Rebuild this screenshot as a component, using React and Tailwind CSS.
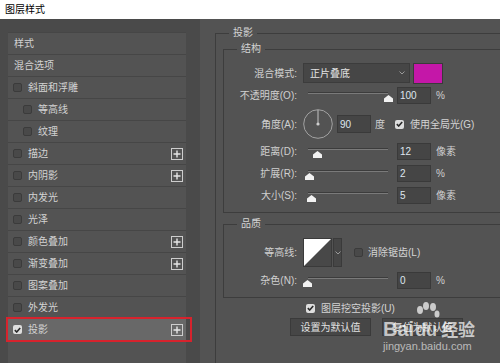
import React from 'react';

const FONT = "font-[family-name:'Liberation_Sans','Noto_Sans_CJK_SC',sans-serif]";

const LAYERS = [
  { title: '样式' },
  { title: '混合选项' },
  { title: '斜面和浮雕', box: true },
  { title: '等高线', box: true, indent: true },
  { title: '纹理', box: true, indent: true },
  { title: '描边', box: true, plus: true },
  { title: '内阴影', box: true, plus: true },
  { title: '内发光', box: true },
  { title: '光泽', box: true },
  { title: '颜色叠加', box: true, plus: true },
  { title: '渐变叠加', box: true, plus: true },
  { title: '图案叠加', box: true },
  { title: '外发光', box: true },
  { title: '投影', box: true, plus: true, checked: true, active: true },
];

function CheckBox({ checked }) {
  if (checked) {
    return (
      <span className="w-[9px] h-[9px] shrink-0 rounded-[2px] bg-[#dedede] flex items-center justify-center">
        <svg width="7" height="6" viewBox="0 0 7 6">
          <path d="M0.8 3.2 L2.7 5 L6.2 0.9" fill="none" stroke="#2a2a2a" strokeWidth="1.6" />
        </svg>
      </span>
    );
  }
  return <span className="block w-[9px] h-[9px] shrink-0 rounded-[2px] bg-[#494949] border border-[#3b3b3b]" />;
}

function PlusBox() {
  return (
    <span className="w-[12px] h-[12px] border border-[#cdcdcd] flex items-center justify-center">
      <svg width="8" height="8" viewBox="0 0 8 8">
        <path d="M4 0.5 V7.5 M0.5 4 H7.5" stroke="#e6e6e6" strokeWidth="1.4" />
      </svg>
    </span>
  );
}

function Thumb() {
  return (
    <svg width="9" height="7" viewBox="0 0 9 7">
      <polygon points="4.5,0 9,3.5 9,7 0,7 0,3.5" fill="#f2f2f2" />
    </svg>
  );
}

// pos = thumb centre in px from the slider's left edge
function Slider({ pos }) {
  return (
    <div className="relative w-[90px] h-[17px] shrink-0">
      <div className="absolute left-[5px] top-[5px] w-[80px] h-[1px] bg-[#3c3c3c]" />
      <div className="absolute left-[5px] top-[6px] w-[80px] h-[1px] bg-[#7a7a7a]" />
      <div className="absolute top-[8px]" style={{ left: pos - 4 }}>
        <Thumb />
      </div>
    </div>
  );
}

function NumBox({ value, w = 'w-[34px]', h = 'h-[17px]' }) {
  return (
    <div className={`${w} ${h} shrink-0 bg-[#454545] border border-[#3a3a3a] pl-[2px] flex items-center text-[10px] text-[#dfe6ee]`}>
      {value}
    </div>
  );
}

function Label({ children }) {
  return <div className="w-[73px] shrink-0 text-right text-[10px] text-[#d0d0d0]">{children}</div>;
}

function SliderRow({ label, pos, value, unit, className }) {
  return (
    <div className={`flex items-center h-[17px] ${className}`}>
      <Label>{label}</Label>
      <div className="ml-[6px]">
        <Slider pos={pos} />
      </div>
      <div className="ml-[4px]">
        <NumBox value={value} />
      </div>
      <span className="ml-[5px] text-[10px] text-[#d0d0d0]">{unit}</span>
    </div>
  );
}

function Chevron() {
  return (
    <svg width="6" height="4" viewBox="0 0 6 4">
      <path d="M0.5 0.5 L3 3 L5.5 0.5" fill="none" stroke="#9a9a9a" strokeWidth="1" />
    </svg>
  );
}

function Group({ title, className, children }) {
  return (
    <div className={`relative border border-[#3d3d3d] ${className}`}>
      <span className="absolute left-[13px] -top-[8px] bg-[#535353] px-[4px] text-[10px] leading-[14px] text-[#d4d4d4]">
        {title}
      </span>
      {children}
    </div>
  );
}

export default function App() {
  return (
    <div className={`relative w-[500px] h-[363px] overflow-hidden bg-[#535353] flex flex-col ${FONT}`}>
      {/* title bar */}
      <div className="h-[19px] shrink-0 bg-white pl-[5px] flex items-center text-[10px] text-black">图层样式</div>

      <div className="flex flex-1 min-h-0">
        {/* layer style list */}
        <div className="w-[200px] shrink-0 bg-[#4a4a4a] pl-[8px] pr-[14px] pt-[13px] flex">
          <div className="w-[178px] bg-[#535353] border-t border-[#464646] flex flex-col">
            {LAYERS.map((l) => (
              <div
                key={l.title}
                className={`h-[22px] shrink-0 border-b border-[#464646] flex items-center pr-[3px] text-[10px] text-[#d2d2d2] ${
                  l.active ? 'bg-[#686868]' : ''
                } ${l.box ? (l.indent ? 'pl-[15px]' : 'pl-[5px]') : 'pl-[6px]'}`}
              >
                {l.box && <CheckBox checked={l.checked} />}
                <span className={l.box ? 'ml-[6px]' : ''}>{l.title}</span>
                {l.plus && (
                  <span className="ml-auto">
                    <PlusBox />
                  </span>
                )}
              </div>
            ))}
          </div>
        </div>

        {/* settings */}
        <div className="flex-1 pl-[15px] pt-[14px]">
          <div className="relative w-[320px] h-full border-l border-t border-[#3d3d3d] pl-[7px] pt-[15px]">
            <span className="absolute left-[13px] -top-[8px] bg-[#535353] px-[4px] text-[10px] leading-[14px] text-[#d4d4d4]">
              投影
            </span>

            <Group title="结构" className="pt-[13px] pb-[8px]">
              <div className="flex items-center h-[20px]">
                <Label>混合模式:</Label>
                <div className="ml-[6px] w-[107px] h-[20px] bg-[#464646] border border-[#3c3c3c] pl-[6px] pr-[4px] flex items-center justify-between text-[10px] text-[#e4e4e4]">
                  <span>正片叠底</span>
                  <Chevron />
                </div>
                <div className="ml-[3px] w-[30px] h-[21px] bg-[#c417a8] border border-[#3a3a3a]" />
              </div>

              <SliderRow label="不透明度(O):" pos={85} value="100" unit="%" className="mt-[4px]" />

              <div className="flex items-center h-[30px] mt-[5px]">
                <Label>角度(A):</Label>
                <svg className="ml-[6px] shrink-0" width="30" height="30" viewBox="0 0 30 30">
                  <circle cx="15" cy="15" r="14.3" fill="none" stroke="#a2a2a2" strokeWidth="1" />
                  <line x1="15" y1="1" x2="15" y2="15" stroke="#c4c4c4" strokeWidth="1" />
                  <circle cx="15" cy="15" r="1.6" fill="#cfcfcf" />
                </svg>
                <div className="ml-[4px]">
                  <NumBox value="90" h="h-[18px]" />
                </div>
                <span className="ml-[4px] text-[10px] text-[#d0d0d0]">度</span>
                <span className="ml-[10px]">
                  <CheckBox checked />
                </span>
                <span className="ml-[6px] text-[10px] text-[#d4d4d4]">使用全局光(G)</span>
              </div>

              <SliderRow label="距离(D):" pos={14} value="12" unit="像素" className="mt-[4px]" />
              <SliderRow label="扩展(R):" pos={6} value="2" unit="%" className="mt-[5px]" />
              <SliderRow label="大小(S):" pos={8} value="5" unit="像素" className="mt-[5px]" />
            </Group>

            <Group title="品质" className="mt-[11px] pt-[13px] pb-[8px]">
              <div className="flex items-center h-[29px]">
                <Label>等高线:</Label>
                <svg className="ml-[6px] shrink-0" width="29" height="29" viewBox="0 0 29 29">
                  <rect x="0" y="0" width="29" height="29" fill="#484848" />
                  <polygon points="1,1 28,1 1,28" fill="#ffffff" />
                  <rect x="0.5" y="0.5" width="28" height="28" fill="none" stroke="#3a3a3a" />
                </svg>
                <div className="ml-[1px] w-[9px] h-[29px] bg-[#464646] border border-[#3a3a3a] flex items-center justify-center">
                  <Chevron />
                </div>
                <span className="ml-[12px]">
                  <CheckBox />
                </span>
                <span className="ml-[5px] text-[10px] text-[#d4d4d4]">消除锯齿(L)</span>
              </div>
              <SliderRow label="杂色(N):" pos={4} value="0" unit="%" className="mt-[5px]" />
            </Group>

            <div className="flex items-center h-[14px] mt-[3px] pl-[83px]">
              <CheckBox checked />
              <span className="ml-[6px] text-[10px] text-[#d4d4d4]">图层挖空投影(U)</span>
            </div>

            <div className="flex mt-[3px] pl-[67px] gap-[11px]">
              <div className="w-[81px] h-[18px] bg-[#464646] border border-[#3a3a3a] flex items-center justify-center text-[10px] text-[#e2e2e2]">
                设置为默认值
              </div>
              <div className="w-[81px] h-[18px] bg-[#464646] border border-[#3a3a3a] flex items-center justify-center text-[10px] text-[#e2e2e2]">
                复位为默认值
              </div>
            </div>
          </div>
        </div>
      </div>

      {/* annotation around the selected row */}
      <div className="absolute left-[6px] top-[317px] w-[186px] h-[25px] border-2 border-[#d7232d]" />

      {/* watermark */}
      <div className="absolute left-[383px] top-[302px] flex flex-col items-start text-white/70 pointer-events-none">
        <div className="flex items-end h-[37px]">
          <span className="text-[20px] font-bold leading-[20px] font-[family-name:'Liberation_Sans',sans-serif]">Bai</span>
          <span className="relative w-[26px] h-[37px]">
            <svg className="absolute left-0 top-0" width="26" height="22" viewBox="0 0 26 22">
              <ellipse cx="6" cy="8" rx="3" ry="4" fill="currentColor" />
              <ellipse cx="12" cy="4" rx="3" ry="4" fill="currentColor" />
              <ellipse cx="19" cy="5" rx="3" ry="4" fill="currentColor" />
              <ellipse cx="23" cy="12" rx="2.5" ry="3.5" fill="currentColor" />
            </svg>
            <span className="absolute left-[1px] bottom-0 text-[18px] font-bold leading-[18px] font-[family-name:'Liberation_Sans',sans-serif]">du</span>
          </span>
          <span className="ml-[1px] text-[17px] font-bold leading-[20px] font-[family-name:'Noto_Sans_CJK_SC',sans-serif]">经验</span>
        </div>
        <span className="mt-[1px] text-[11px] leading-[12px] text-white/60 font-[family-name:'Liberation_Sans',sans-serif]">
          jingyan.baidu.com
        </span>
      </div>
    </div>
  );
}
